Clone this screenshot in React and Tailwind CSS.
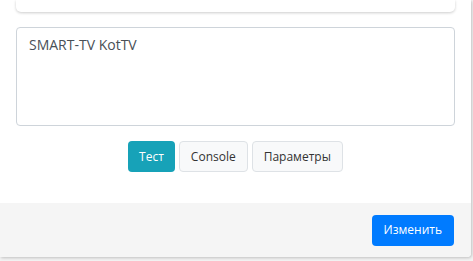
export default function App() {
  const font = { fontFamily: '"Open Sans", "Noto Sans", sans-serif' };
  return (
    <div className="w-[473px] h-[261px] bg-[#f2f2f2] overflow-hidden" style={font}>
      <div className="w-[471px] h-[257px] bg-white rounded-br-[4px] shadow-[1px_1px_3px_rgba(0,0,0,0.2)] flex flex-col">
        <div className="h-[203px] px-4">
          <div className="h-[12px] bg-white rounded-b-[5px] shadow-[0_1px_3px_rgba(0,0,0,0.2)]"></div>
          <div className="mt-[15px] h-[99px] border border-[#ced4da] rounded-[4px] px-3 pt-[6px] text-[14px] text-[#495057]">
            SMART-TV KotTV
          </div>
          <div className="mt-[15px] flex justify-center gap-[4px] text-[12px]">
            <button className="h-[31px] px-[11px] rounded-[4px] bg-[#17a2b8] text-white">Тест</button>
            <button className="h-[31px] px-[11px] rounded-[4px] bg-[#f8f9fa] border border-[#dee2e6] text-[#333]">Console</button>
            <button className="h-[31px] px-[11px] rounded-[4px] bg-[#f8f9fa] border border-[#dee2e6] text-[#333]">Параметры</button>
          </div>
        </div>
        <div className="flex-1 bg-[#f5f5f5] rounded-br-[4px] flex items-center justify-end pr-[17px]">
          <button className="h-[31px] px-[12px] rounded-[4px] bg-[#007bff] text-white text-[12px]">Изменить</button>
        </div>
      </div>
    </div>
  );
}
